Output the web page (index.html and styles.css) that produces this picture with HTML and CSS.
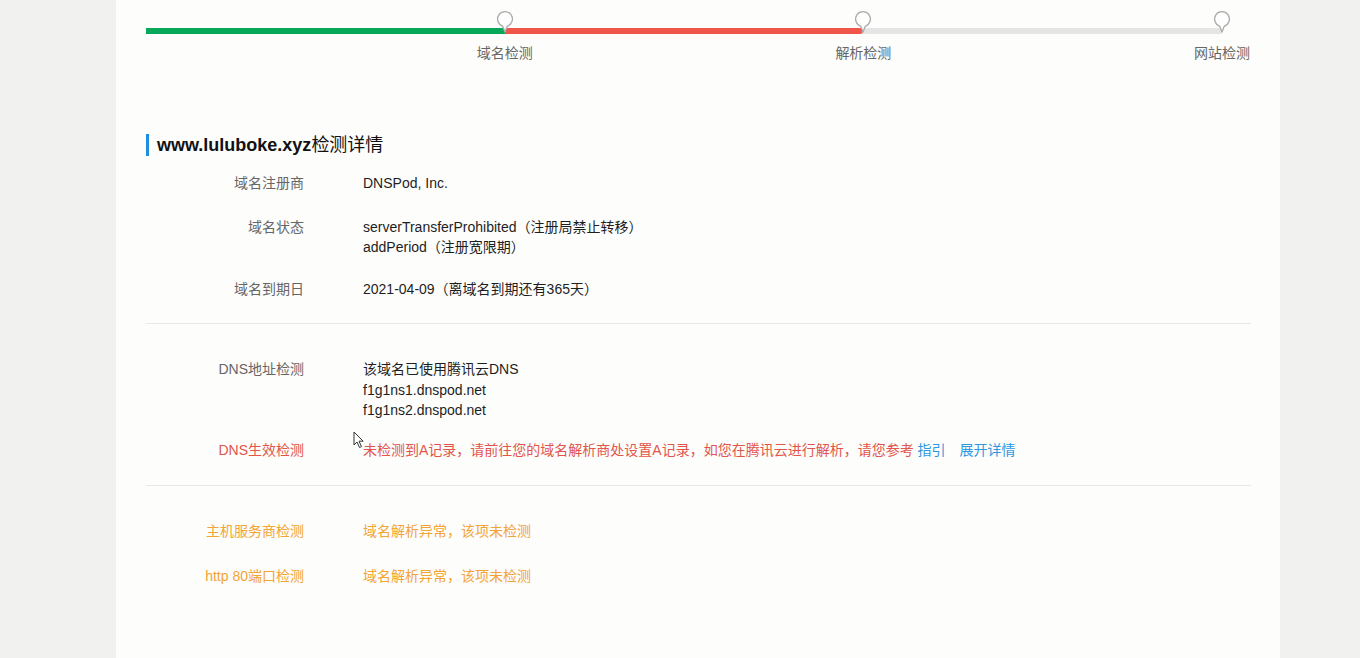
FILE: index.html
```html
<!DOCTYPE html>
<html lang="zh-CN">
<head>
<meta charset="utf-8">
<title>域名检测</title>
<link rel="stylesheet" href="styles.css">
</head>
<body>
<div class="panel">
  <div class="steps">
    <div class="track">
      <div class="seg seg-green"></div>
      <div class="seg seg-red"></div>
      <div class="seg seg-gray"></div>
    </div>
    <div class="step-row">
      <div class="step">
        <svg class="pin" width="18" height="22" viewBox="0 0 18 22"><path d="M9 21 L6.6 15.1 A7.4 7.4 0 1 1 11.4 15.1 Z" fill="#fff" stroke="#ababab" stroke-width="1.3" stroke-linejoin="round"/></svg>
        <span class="step-label">域名检测</span>
      </div>
      <div class="step">
        <svg class="pin" width="18" height="22" viewBox="0 0 18 22"><path d="M9 21 L6.6 15.1 A7.4 7.4 0 1 1 11.4 15.1 Z" fill="#fff" stroke="#ababab" stroke-width="1.3" stroke-linejoin="round"/></svg>
        <span class="step-label">解析检测</span>
      </div>
      <div class="step">
        <svg class="pin" width="18" height="22" viewBox="0 0 18 22"><path d="M9 21 L6.6 15.1 A7.4 7.4 0 1 1 11.4 15.1 Z" fill="#fff" stroke="#ababab" stroke-width="1.3" stroke-linejoin="round"/></svg>
        <span class="step-label">网站检测</span>
      </div>
    </div>
  </div>

  <h2 class="title"><span class="title-en">www.luluboke.xyz</span>检测详情</h2>

  <div class="section section-first">
    <div class="row"><div class="label">域名注册商</div><div class="value">DNSPod, Inc.</div></div>
    <div class="row row-mid"><div class="label">域名状态</div><div class="value">serverTransferProhibited（注册局禁止转移）<br>addPeriod（注册宽限期）</div></div>
    <div class="row"><div class="label">域名到期日</div><div class="value">2021-04-09（离域名到期还有365天）</div></div>
  </div>

  <div class="section">
    <div class="row"><div class="label">DNS地址检测</div><div class="value">该域名已使用腾讯云DNS<br>f1g1ns1.dnspod.net<br>f1g1ns2.dnspod.net</div></div>
    <div class="row row-error"><div class="label">DNS生效检测</div><div class="value">未检测到A记录，请前往您的域名解析商处设置A记录，如您在腾讯云进行解析，请您参考 <a class="link" href="#">指引</a><a class="link link-more" href="#">展开详情</a></div></div>
  </div>

  <div class="section section-last">
    <div class="row row-warn"><div class="label">主机服务商检测</div><div class="value">域名解析异常，该项未检测</div></div>
    <div class="row row-warn"><div class="label">http 80端口检测</div><div class="value">域名解析异常，该项未检测</div></div>
  </div>

  <svg class="cursor" width="12" height="18" viewBox="0 0 12 18"><path d="M1 1 L1 14 L4 11 L6.5 16.5 L8.5 15.6 L6 10.2 L10.2 10.2 Z" fill="#fff" stroke="#333" stroke-width="1" stroke-linejoin="round"/></svg>
</div>
</body>
</html>
```

FILE: styles.css
```css
html, body {
  margin: 0;
  padding: 0;
  height: 100%;
  background: #f1f1f0;
  font-family: "Liberation Sans", "Noto Sans CJK SC", Arial, sans-serif;
  font-size: 14px;
  color: #222;
}

.panel {
  position: relative;
  margin-left: 116px;
  width: 1164px;
  min-height: 658px;
  box-sizing: border-box;
  padding: 0 29px 0 30px;
  background: #fdfdfc;
}

/* steps */
.steps {
  position: relative;
  padding-top: 11px;
}
.track {
  position: absolute;
  left: 0;
  top: 28px;
  width: 1076px;
  height: 6px;
  display: flex;
}
.seg { height: 6px; flex: 1; }
.seg-green { background: #07a85a; }
.seg-red { background: #f0554a; border-radius: 0 4px 4px 0; }
.seg-gray { background: #e5e5e5; }

.step-row {
  position: relative;
  display: flex;
}
.step {
  width: 358.7px;
  display: flex;
  flex-direction: column;
  align-items: flex-end;
}
.pin {
  display: block;
  margin-right: -9px;
}
.step-label {
  margin-top: 10px;
  margin-right: -28px;
  width: 56px;
  text-align: center;
  color: #666;
  line-height: 20px;
  white-space: nowrap;
}

/* title */
.title {
  margin: 71px 0 0;
  padding-left: 8px;
  border-left: 3px solid #1f8ee0;
  font-size: 18px;
  font-weight: normal;
  line-height: 22px;
  color: #111;
}
.title-en { font-weight: bold; }

/* sections */
.section {
  padding: 24px 0 14px;
  border-bottom: 1px solid #e8e8e8;
}
.section-first { padding-top: 6px; padding-bottom: 13px; }
.section-last { padding-top: 23px; border-bottom: none; }

.row {
  display: grid;
  grid-template-columns: 158px 1fr;
  column-gap: 59px;
  padding: 11px 0;
  line-height: 20.5px;
}
.row-mid { padding-top: 12px; padding-bottom: 10px; }
.label {
  text-align: right;
  color: #666;
  white-space: nowrap;
}
.value {
  color: #1e1e1e;
}

.row-error { padding-top: 8px; }
.row-error .label, .row-error .value { color: #e2554b; }
.row-warn { padding: 12px 0; }
.row-warn .label, .row-warn .value { color: #f2a435; }

.link {
  color: #2e98e0;
  text-decoration: none;
}
.link-more { margin-left: 14px; }

.cursor {
  position: absolute;
  left: 237px;
  top: 431px;
}
```
